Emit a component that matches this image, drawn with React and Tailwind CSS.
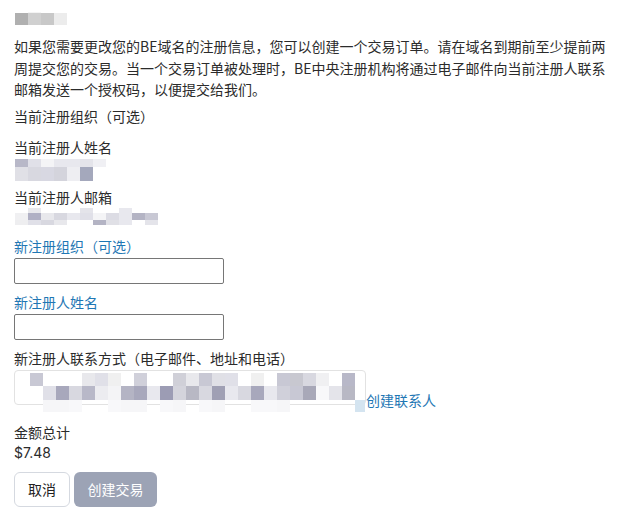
import React from "react";

function Mosaic({ rows, cell = 13, heights, width, x0 = 0, className = "" }) {
  let y = 0;
  const rects = [];
  rows.forEach((row, ri) => {
    const h = heights[ri];
    row.forEach((c, ci) => {
      if (c && c !== "fff") {
        rects.push(
          <rect key={ri + "-" + ci} x={x0 + ci * cell} y={y} width={cell} height={h} fill={"#" + c} />
        );
      }
    });
    y += h;
  });
  return (
    <svg className={className} width={width} height={y} viewBox={`0 0 ${width} ${y}`} shapeRendering="crispEdges">
      {rects}
    </svg>
  );
}

const titleRows = [
  ["fff", "f4f4f4", "fff", "fff"],
  ["b0b0b0", "d0d0d0", "c8c8c8", "ececec"],
];
const nameRows = [
  ["b8b8c8", "e0e0e8", "f4f4f6", "e8e8ee", "e8e8ee", "e4e4ea", "f0f0f4"],
  ["e0e0e6", "d8d8e0", "d8d8e2", "d4d4dc", "eeeef2", "a4a8bc", "fff"],
];
const emailRows = [
  ["fff", "e8e8ec", "fff", "fff", "fff", "e4e4ea", "fff", "fff", "e8e8ee", "fff", "fff"],
  ["f0f0f2", "b0b0c4", "e8e8ec", "d8d8e0", "e8e8ee", "e0e0e8", "f4f4f6", "dcdce4", "e8e8ee", "b4b4c4", "c8c8d4"],
  ["eeeef0", "e0e0e8", "d8d8e0", "e8e8ec", "fff", "fff", "b4b4c4", "e0e0e6", "e8e8ee", "fff", "e4e4ea"],
];
const contactRows = [
  ["c8c8d4", "fff", "fff", "fff", "e8e8ec", "e0e0e8", "f0f0f0", "fff", "d0d0da", "fff", "fff", "d0d0d8", "e8e8ec",
   "c8c8d4", "e0e0e6", "e0e0e8", "fff", "f0f0f0", "fff", "c8c8d4", "c8c8d0", "d8d8e0", "f0f0f2", "fff", "b8b8c8", "fff"],
  ["fff", "e0e0e8", "a8a8bc", "d8d8e0", "b8b8c8", "ececf0", "f4f4f6", "b4b4c4", "a8a8bc", "e8e8ee", "9c9cb4", "d4d4dc", "b8b8c4",
   "d8d8e0", "a0a0b4", "e8e8ee", "d8d8e0", "a8a8bc", "e8e8ee", "d0d0da", "c8c8d4", "a8a8b8", "f8f8fa", "e4e4ea", "b8b8c4", "fff"],
  ["fff", "f6f6f8", "f6f6f8", "f8f8fa", "fff", "fff", "f8f8fa", "f6f6f8", "f6f6f8", "fff", "f8f8fa", "f6f6f8", "fff",
   "f8f8fa", "f6f6f8", "fff", "fff", "f8f8fa", "f8f8fa", "f6f6f8", "fff", "fff", "fff", "fff", "fff", "d4e4f0"],
];

const font = { fontFamily: '"Noto Sans CJK SC", "Noto Sans", sans-serif' };

export default function App() {
  return (
    <div
      className="w-[627px] h-[515px] bg-white text-[14px] leading-[20px] text-[#2b2b2b] pl-[14px] pt-[12px] overflow-hidden"
      style={font}
    >
      <Mosaic rows={titleRows} heights={[1, 12]} width={54} className="block ml-[1px]" />
      <p className="mt-[11px] leading-[21.5px] w-[600px]">
        如果您需要更改您的BE域名的注册信息，您可以创建一个交易订单。请在域名到期前至少提前两
        <br />
        周提交您的交易。当一个交易订单被处理时，BE中央注册机构将通过电子邮件向当前注册人联系
        <br />
        邮箱发送一个授权码，以便提交给我们。
      </p>
      <div className="mt-[5px]">当前注册组织（可选）</div>
      <div className="mt-[11px]">当前注册人姓名</div>
      <Mosaic rows={nameRows} heights={[8, 14]} width={96} className="block mt-[2px] ml-[1px]" />
      <div className="mt-[6px]">当前注册人邮箱</div>
      <Mosaic rows={emailRows} heights={[5, 7, 5]} width={145} className="block mt-[1px] ml-[1px]" />
      <div className="mt-[11px] text-[#1f77b4]">新注册组织（可选）</div>
      <input className="block mt-[2px] w-[210px] h-[26px] border border-[#767676] rounded-[2px] outline-none" />
      <div className="mt-[8px] text-[#1f77b4]">新注册人姓名</div>
      <input className="block mt-[2px] w-[210px] h-[26px] border border-[#767676] rounded-[2px] outline-none" />
      <div className="mt-[8px]">新注册人联系方式（电子邮件、地址和电话）</div>
      <div className="mt-[2px] flex items-start">
        <div className="relative w-[352px] h-[35px] border border-[#e2e2e2] rounded-[4px]">
          <Mosaic
            rows={contactRows}
            heights={[13, 14, 12]}
            width={350}
            x0={15}
            className="absolute left-0 top-[2px]"
          />
        </div>
        <a className="mt-[20px] text-[#1f77b4] leading-[20px]">创建联系人</a>
      </div>
      <div className="mt-[12px]">金额总计</div>
      <div className="mt-[1px]" style={{ fontFamily: 'Inter, "Noto Sans", sans-serif' }}>$7.48</div>
      <div className="mt-[9px] flex gap-[4px]">
        <button className="w-[56px] h-[35px] border border-[#d5d9e0] rounded-[6px] bg-white text-[#222]">取消</button>
        <button className="w-[83px] h-[35px] rounded-[6px] bg-[#9ca3b5] text-white">创建交易</button>
      </div>
    </div>
  );
}
